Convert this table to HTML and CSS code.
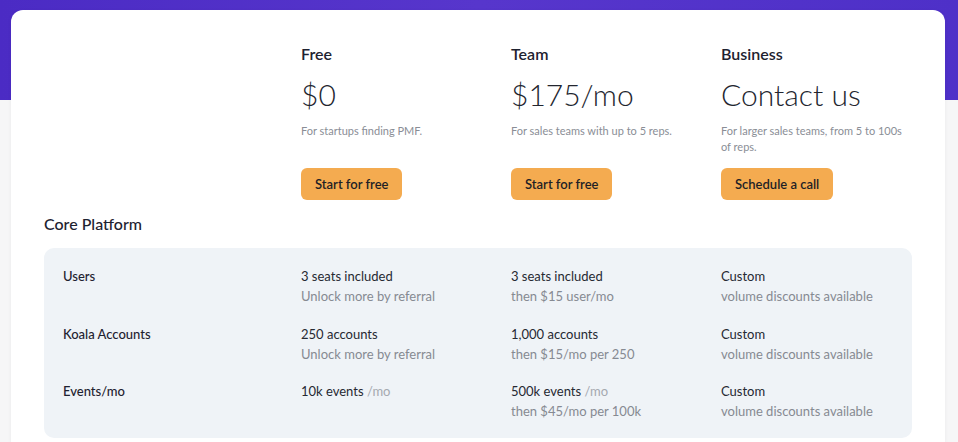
FILE: index.html
```html
<!DOCTYPE html>
<html>
<head>
<meta charset="utf-8">
<link rel="stylesheet" href="styles.css">
</head>
<body>
<div class="card">
  <div class="plans">
    <div class="plan-spacer"></div>
    <div class="plan">
      <div class="plan-name">Free</div>
      <div class="plan-price">$0</div>
      <div class="plan-desc">For startups finding PMF.</div>
      <button class="btn">Start for free</button>
    </div>
    <div class="plan">
      <div class="plan-name">Team</div>
      <div class="plan-price">$175/mo</div>
      <div class="plan-desc">For sales teams with up to 5 reps.</div>
      <button class="btn">Start for free</button>
    </div>
    <div class="plan">
      <div class="plan-name">Business</div>
      <div class="plan-price">Contact us</div>
      <div class="plan-desc">For larger sales teams, from 5 to 100s of reps.</div>
      <button class="btn">Schedule a call</button>
    </div>
  </div>

  <h2 class="section-title">Core Platform</h2>
  <div class="table">
    <div class="row">
      <div class="label">Users</div>
      <div class="cell"><div class="main">3 seats included</div><div class="sub">Unlock more by referral</div></div>
      <div class="cell"><div class="main">3 seats included</div><div class="sub">then $15 user/mo</div></div>
      <div class="cell"><div class="main">Custom</div><div class="sub">volume discounts available</div></div>
    </div>
    <div class="row">
      <div class="label">Koala Accounts</div>
      <div class="cell"><div class="main">250 accounts</div><div class="sub">Unlock more by referral</div></div>
      <div class="cell"><div class="main">1,000 accounts</div><div class="sub">then $15/mo per 250</div></div>
      <div class="cell"><div class="main">Custom</div><div class="sub">volume discounts available</div></div>
    </div>
    <div class="row">
      <div class="label">Events/mo</div>
      <div class="cell"><div class="main">10k events <span class="unit">/mo</span></div></div>
      <div class="cell"><div class="main">500k events <span class="unit">/mo</span></div><div class="sub">then $45/mo per 100k</div></div>
      <div class="cell"><div class="main">Custom</div><div class="sub">volume discounts available</div></div>
    </div>
  </div>
</div>
</body>
</html>
```

FILE: styles.css
```css
* { box-sizing: border-box; }
html, body { margin: 0; padding: 0; }
body {
  width: 958px;
  height: 442px;
  overflow: hidden;
  font-family: "Lato", "Noto Sans", sans-serif;
  color: #1e2230;
  background: linear-gradient(90deg, #4b2bc4 0%, #5736cc 50%, #4e30c8 100%) top left / 100% 100px no-repeat, #f6f6f7;
  padding-top: 10px;
}
.card {
  margin-left: 11px;
  width: 934px;
  height: 432px;
  overflow: hidden;
  background: #fff;
  border-radius: 12px 12px 0 0;
  box-shadow: 0 1px 4px rgba(0,0,0,0.05);
  padding: 32px 0 0 33px;
}
.plans {
  display: flex;
}
.plan-spacer { width: 257px; flex-shrink: 0; }
.plan {
  width: 210px;
  flex-shrink: 0;
  display: flex;
  flex-direction: column;
  align-items: flex-start;
}
.plan-name {
  font-size: 16px;
  line-height: 24px;
  font-weight: 600;
}
.plan-price {
  margin-top: 10px;
  font-size: 30px;
  line-height: 36px;
  font-weight: 300;
  color: #23262f;
}
.plan-desc {
  margin-top: 11px;
  width: 188px;
  min-height: 32px;
  font-size: 11px;
  line-height: 16px;
  color: #8a8e96;
}
.btn {
  margin-top: 13px;
  height: 32px;
  padding: 0 14px;
  border: 0;
  border-radius: 6px;
  background: #f4ab50;
  color: #1e1f26;
  font-family: inherit;
  font-size: 13px;
  font-weight: 600;
}
.section-title {
  margin: 12px 0 0;
  font-size: 16px;
  line-height: 24px;
  font-weight: 500;
}
.table {
  margin-top: 12px;
  width: 868px;
  background: #eff3f7;
  border-radius: 10px;
  padding: 18px 0 17px 19px;
  display: flex;
  flex-direction: column;
  gap: 17.5px;
}
.row {
  display: flex;
  font-size: 13px;
  line-height: 20px;
}
.label {
  width: 238px;
  flex-shrink: 0;
  font-weight: 500;
}
.cell { width: 210px; flex-shrink: 0; }
.main { color: #262932; }
.sub { color: #868a92; }
.unit { color: #a5a9b0; }
```
